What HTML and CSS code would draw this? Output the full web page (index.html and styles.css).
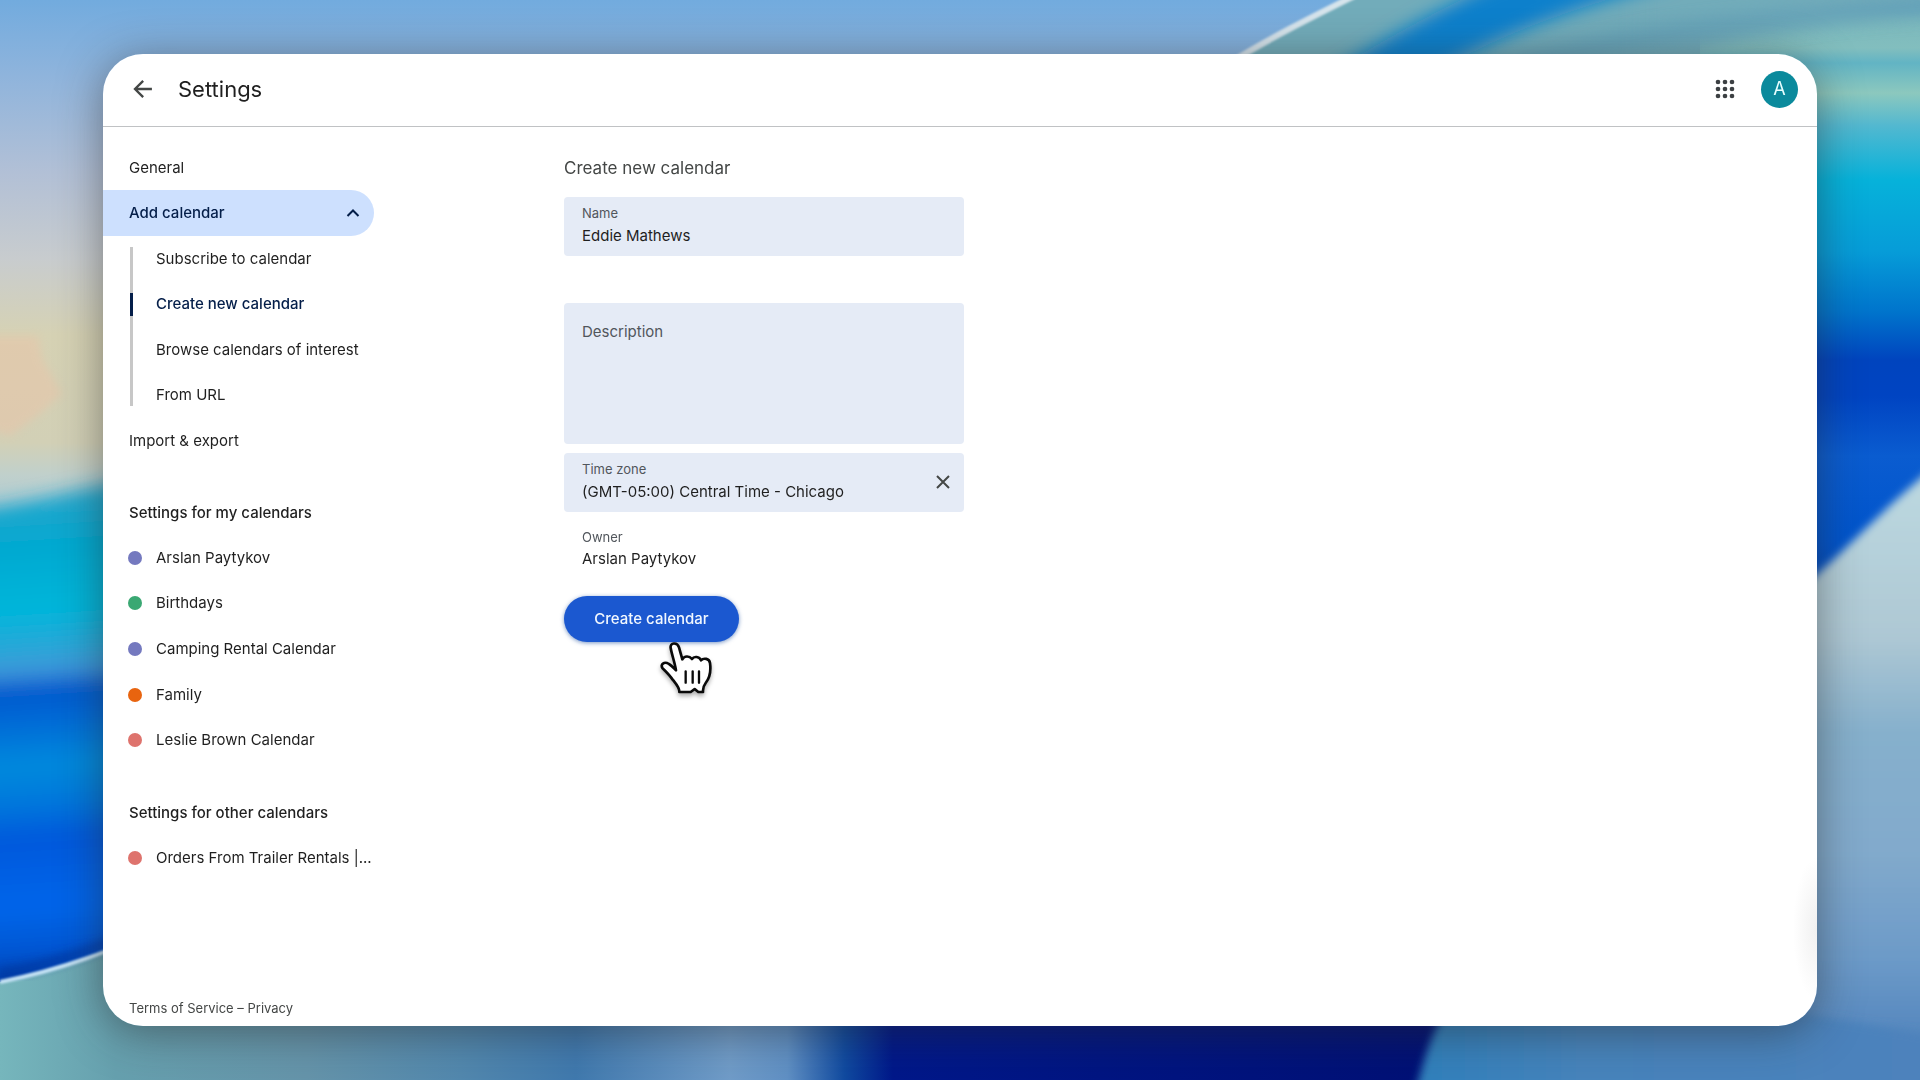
FILE: index.html
```html
<!DOCTYPE html>
<html lang="en">
<head>
<meta charset="utf-8">
<title>Settings</title>
<link rel="stylesheet" href="styles.css">
</head>
<body>
<svg class="wallpaper" viewBox="0 0 1920 1080" preserveAspectRatio="none" aria-hidden="true">
  <defs>
    <linearGradient id="sky" x1="0" y1="0" x2="0" y2="1">
      <stop offset="0" stop-color="#72abde"/><stop offset=".07" stop-color="#8fb4dc"/>
      <stop offset=".16" stop-color="#b2c0d6"/><stop offset=".24" stop-color="#c8ccce"/>
      <stop offset=".31" stop-color="#d6d2b4"/><stop offset=".41" stop-color="#d2d0b6"/>
      <stop offset=".44" stop-color="#c0d0cc"/><stop offset=".5" stop-color="#9cc6d8"/>
    </linearGradient>
    <linearGradient id="sea" gradientUnits="userSpaceOnUse" x1="0" y1="496" x2="30" y2="980">
      <stop offset="0" stop-color="#28a6cc"/><stop offset=".1" stop-color="#04a8d0"/>
      <stop offset=".24" stop-color="#00b6da"/><stop offset=".33" stop-color="#30a4d8"/>
      <stop offset=".37" stop-color="#3f92da"/><stop offset=".4" stop-color="#0058cc"/>
      <stop offset=".46" stop-color="#0068d6"/><stop offset=".56" stop-color="#008add"/>
      <stop offset=".64" stop-color="#0076dc"/><stop offset=".71" stop-color="#0058dc"/>
      <stop offset=".85" stop-color="#0066ea"/><stop offset=".95" stop-color="#0054d0"/>
      <stop offset="1" stop-color="#0038a0"/>
    </linearGradient>
    <linearGradient id="floor" x1="0" y1="0" x2="1" y2="0">
      <stop offset="0" stop-color="#76b6bc"/><stop offset=".06" stop-color="#66a0ae"/>
      <stop offset=".16" stop-color="#6594aa"/><stop offset=".24" stop-color="#5288ae"/>
      <stop offset=".3" stop-color="#4079ae"/><stop offset=".38" stop-color="#709cc8"/>
      <stop offset=".41" stop-color="#6090c4"/><stop offset=".44" stop-color="#104aa0"/>
      <stop offset=".465" stop-color="#00188a"/><stop offset=".76" stop-color="#001074"/>
      <stop offset="1" stop-color="#001074"/>
    </linearGradient>
    <linearGradient id="right" gradientUnits="userSpaceOnUse" x1="0" y1="0" x2="0" y2="600">
      <stop offset="0" stop-color="#5fa0c0"/><stop offset=".03" stop-color="#7cb8bc"/>
      <stop offset=".08" stop-color="#82bebe"/><stop offset=".105" stop-color="#62b4c4"/>
      <stop offset=".155" stop-color="#8cc8be"/><stop offset=".21" stop-color="#52b8d0"/>
      <stop offset=".3" stop-color="#06b2da"/><stop offset=".42" stop-color="#069cd8"/>
      <stop offset=".52" stop-color="#0074cc"/><stop offset=".6" stop-color="#0044be"/>
      <stop offset=".66" stop-color="#0044c2"/><stop offset=".76" stop-color="#0a5cd0"/>
      <stop offset=".9" stop-color="#0054cc"/><stop offset="1" stop-color="#0048bc"/>
    </linearGradient>
    <linearGradient id="sand" gradientUnits="userSpaceOnUse" x1="0" y1="480" x2="0" y2="1080">
      <stop offset="0" stop-color="#bcd8e0"/><stop offset=".26" stop-color="#aec8d4"/>
      <stop offset=".42" stop-color="#86b0cc"/><stop offset=".62" stop-color="#82aacc"/>
      <stop offset=".8" stop-color="#6c9ac8"/><stop offset="1" stop-color="#487cb8"/>
    </linearGradient>
    <linearGradient id="shore" x1="0" y1="0" x2="1" y2="0">
      <stop offset="0" stop-color="#3080bc"/><stop offset=".3" stop-color="#4684bc"/>
      <stop offset="1" stop-color="#4e82bc"/>
    </linearGradient>
    <filter id="soft1"><feGaussianBlur stdDeviation="1"/></filter>
    <filter id="soft4"><feGaussianBlur stdDeviation="4"/></filter>
    <filter id="soft9"><feGaussianBlur stdDeviation="9"/></filter>
  </defs>
  <rect width="1920" height="1080" fill="url(#sky)"/>
  <path d="M-10 336H38L42 358L62 394L40 414L10 436L-10 430Z" fill="#f0c0a4" opacity=".4" filter="url(#soft4)"/>
  <path d="M-40 512C20 504 70 494 180 466V1100H-40Z" fill="url(#sea)" filter="url(#soft9)"/>
  <path d="M0 982C60 970 110 952 180 920H1920V1080H0Z" fill="url(#floor)"/>
  <path d="M0 974C60 963 110 944 180 912" fill="none" stroke="#00349c" stroke-width="10" opacity=".6" filter="url(#soft4)"/>
  <path d="M0 982C60 970 110 952 180 920" fill="none" stroke="#c4e2f4" stroke-width="4" filter="url(#soft1)"/>
  <path d="M1354-4C1310 18 1270 38 1230 62V300H1700V640H1920V-4Z" fill="url(#right)"/>
  <path d="M1354-4C1310 18 1270 38 1230 62H1700V-4Z" fill="#72acba"/>
  <path d="M1640-20H1960V8C1860 12 1760 26 1640 70Z" fill="#72acba" filter="url(#soft9)"/>
  <path d="M1500-20C1440 10 1380 40 1320 80H1420C1490 40 1560 10 1680-20Z" fill="#0a80cc" filter="url(#soft9)"/>
  <path d="M1500 70C1600 40 1740 20 1960 6" fill="none" stroke="#5898b6" stroke-width="16" opacity=".6" filter="url(#soft9)"/>
  <path d="M1354-4C1310 18 1270 38 1228 64" fill="none" stroke="#d6e4ec" stroke-width="6" filter="url(#soft1)"/>
  <path d="M1780 602C1830 572 1870 516 1960 446V1120H1780Z" fill="url(#sand)" filter="url(#soft4)"/>
  <path d="M1446 1010C1430 1036 1424 1060 1416 1090H1960V1040L1780 1010Z" fill="url(#shore)" filter="url(#soft4)"/>
</svg>

<div class="window">
  <header class="topbar">
    <button class="icon-button" type="button" aria-label="Back">
      <svg width="28" height="28" viewBox="0 0 24 24" fill="none" stroke="#444746" stroke-width="2"><path d="M20.500 12H6M13 5L6 12L13 19"/></svg>
    </button>
    <h1 class="title">Settings</h1>
    <button class="icon-button apps" type="button" aria-label="Apps">
      <svg width="28" height="28" viewBox="0 0 24 24" fill="#3c4043"><circle cx="6" cy="6" r="2"/><circle cx="12" cy="6" r="2"/><circle cx="18" cy="6" r="2"/><circle cx="6" cy="12" r="2"/><circle cx="12" cy="12" r="2"/><circle cx="18" cy="12" r="2"/><circle cx="6" cy="18" r="2"/><circle cx="12" cy="18" r="2"/><circle cx="18" cy="18" r="2"/></svg>
    </button>
    <button class="avatar" type="button" aria-label="Account">A</button>
  </header>

  <div class="content">
    <div class="sidebar">
      <nav>
        <a class="row" href="#general">General</a>
        <button class="row section-toggle" type="button" aria-expanded="true">Add calendar
          <svg width="24" height="24" viewBox="0 0 24 24" fill="none" stroke="#041e49" stroke-width="2"><path d="M6.500 15L12 9.500L17.500 15"/></svg>
        </button>
        <ul class="sublist">
          <li><a href="#subscribe">Subscribe to calendar</a></li>
          <li class="current"><a href="#create">Create new calendar</a></li>
          <li><a href="#browse">Browse calendars of interest</a></li>
          <li><a href="#url">From URL</a></li>
        </ul>
        <a class="row" href="#import">Import &amp; export</a>
        <h2 class="group">Settings for my calendars</h2>
        <ul class="calendars mine">
          <li><a href="#c1"><span class="dot indigo"></span>Arslan Paytykov</a></li>
          <li><a href="#c2"><span class="dot green"></span>Birthdays</a></li>
          <li><a href="#c3"><span class="dot indigo"></span>Camping Rental Calendar</a></li>
          <li><a href="#c4"><span class="dot orange"></span>Family</a></li>
          <li><a href="#c5"><span class="dot coral"></span>Leslie Brown Calendar</a></li>
        </ul>
        <h2 class="group">Settings for other calendars</h2>
        <ul class="calendars">
          <li><a href="#c6"><span class="dot coral"></span>Orders From Trailer Rentals |...</a></li>
        </ul>
      </nav>
      <footer class="legal"><a href="#terms">Terms of Service</a> – <a href="#privacy">Privacy</a></footer>
    </div>

    <main>
      <form class="form">
        <h2 class="form-title">Create new calendar</h2>
        <div class="field name">
          <label for="name">Name</label>
          <input id="name" type="text" value="Eddie Mathews">
        </div>
        <div class="field description">
          <label for="description">Description</label>
          <textarea id="description"></textarea>
        </div>
        <div class="field zone">
          <label for="zone">Time zone</label>
          <input id="zone" type="text" value="(GMT-05:00) Central Time - Chicago">
          <button class="clear" type="button" aria-label="Clear time zone">
            <svg width="24" height="24" viewBox="0 0 24 24" fill="none" stroke="#444746" stroke-width="2"><path d="M6 6L18 18M18 6L6 18"/></svg>
          </button>
        </div>
        <dl class="owner">
          <dt>Owner</dt>
          <dd>Arslan Paytykov</dd>
        </dl>
        <div class="submit">
          <button class="create" type="button">Create calendar</button>
          <svg class="pointer" width="80" height="80" viewBox="0 0 240 240" aria-hidden="true">
            <path fill="#fff" stroke="#0a0a0a" stroke-width="8" stroke-linejoin="round" d="M62 54C59 37 82 36 87 52L97 88C103 77 118 77 126 87C132 78 148 79 153 91C161 83 178 85 180 99C184 128 179 144 167 159C160 168 158 173 159 186H145L134 177L122 186H88C89 173 78 162 68 149C58 134 46 123 38 115C29 103 43 93 57 102C66 107 71 114 78 121C75 100 65 72 62 54Z"/>
            <path fill="none" stroke="#0a0a0a" stroke-width="7" stroke-linecap="round" d="M107 124V158M128 124V158M147 124V158"/>
          </svg>
        </div>
      </form>
    </main>
  </div>
</div>
</body>
</html>
```
FILE: styles.css
```css
* { box-sizing: border-box; }

body {
  margin: 0;
  min-height: 100vh;
  padding: 54px 103px;
  display: flex;
  font: 15px/20px Inter, "Liberation Sans", sans-serif;
  color: #1f1f1f;
}

h1, h2, ul, dl, dd { margin: 0; padding: 0; font-weight: 400; }
ul { list-style: none; }
a { color: inherit; text-decoration: none; }
button, input, textarea { font: inherit; color: inherit; border: 0; padding: 0; margin: 0; background: none; }
svg { display: block; }

.wallpaper {
  position: fixed;
  inset: 0;
  z-index: -1;
  width: 100%;
  height: 100%;
}

.window {
  flex: 1;
  display: flex;
  flex-direction: column;
  overflow: hidden;
  border-radius: 40px;
  background: radial-gradient(ellipse 24px 72px at 100% 90%, #f0f0f0, #fff);
  box-shadow: 0 6px 44px rgba(40, 40, 40, .5);
}

.topbar {
  display: flex;
  align-items: center;
  height: 73px;
  padding: 0 19px 2px 25px;
  border-bottom: 1px solid #c0c2c4;
}

.title { margin-left: 22px; font-size: 22px; line-height: 28px; }
.apps { margin-left: auto; }

.avatar {
  width: 37px;
  height: 37px;
  margin-left: 22px;
  border-radius: 50%;
  background: #0b8a9c;
  color: #e8ffff;
  font-size: 18px;
}

.content { flex: 1; display: flex; }

.sidebar {
  width: 271px;
  display: flex;
  flex-direction: column;
  padding-top: 18px;
}

.row {
  display: flex;
  align-items: center;
  width: 100%;
  height: 45px;
  padding-left: 26px;
}

.section-toggle {
  height: 46px;
  justify-content: space-between;
  padding-right: 9px;
  border-radius: 0 23px 23px 0;
  background: #cde0fe;
  color: #041e49;
  font-weight: 500;
}

.sublist {
  position: relative;
  display: grid;
  grid-auto-rows: 1fr;
  min-height: 182px;
}

.sublist::before {
  content: "";
  position: absolute;
  left: 27px;
  top: 11px;
  bottom: 12px;
  width: 3px;
  background: #c7c7c7;
}

.sublist li { display: flex; align-items: center; padding-left: 53px; white-space: nowrap; }
.sublist .current { position: relative; font-weight: 500; color: #041e49; }

.current::before {
  content: "";
  position: absolute;
  left: 27px;
  top: 11px;
  bottom: 11px;
  width: 3px;
  background: #041e49;
}

.group { padding: 40px 0 12px 26px; font-size: 15px; line-height: 20px; font-weight: 500; }

.calendars { display: grid; grid-auto-rows: 1fr; min-height: 46px; }
.mine { min-height: 228px; }
.calendars a { display: flex; align-items: center; height: 100%; padding-left: 25px; white-space: nowrap; }

.dot { width: 14px; height: 14px; margin-right: 14px; border-radius: 50%; }
.indigo { background: #7479bf; }
.green { background: #3aa873; }
.orange { background: #e8640f; }
.coral { background: #de736d; }

.legal { margin-top: auto; padding: 0 0 8px 26px; font-size: 13px; color: #444746; }

main { flex: 1; padding: 29px 0 0 190px; }
.form { width: 400px; }
.form-title { font-size: 17px; line-height: 24px; color: #444746; }

.field {
  position: relative;
  display: flex;
  flex-direction: column;
  padding: 6px 18px 9px;
  border-radius: 4px;
  background: #e5ebf6;
}

.field label, .owner dt { font-size: 13px; line-height: 20px; color: #51565c; }
.field input { height: 24px; outline: 0; }
.name { margin-top: 17px; }

.description { height: 141px; margin-top: 47px; padding-top: 19px; }
.field.description label { font-size: 15px; }
.description textarea { flex: 1; resize: none; outline: 0; }

.zone { margin-top: 9px; }
.clear { position: absolute; right: 9px; top: 17px; }

.owner { margin-top: 15px; padding-left: 18px; }
.owner dd { line-height: 24px; }

.submit { position: relative; margin-top: 25px; }

.create {
  width: 175px;
  height: 46px;
  border-radius: 23px;
  background: #1b58d0;
  color: #f2f8ff;
  font-weight: 500;
  box-shadow: 0 1px 4px rgba(30, 80, 160, .6);
}

.pointer {
  position: absolute;
  left: 86px;
  top: 34px;
  filter: drop-shadow(0 3px 2px rgba(0, 0, 0, .3));
}
```
